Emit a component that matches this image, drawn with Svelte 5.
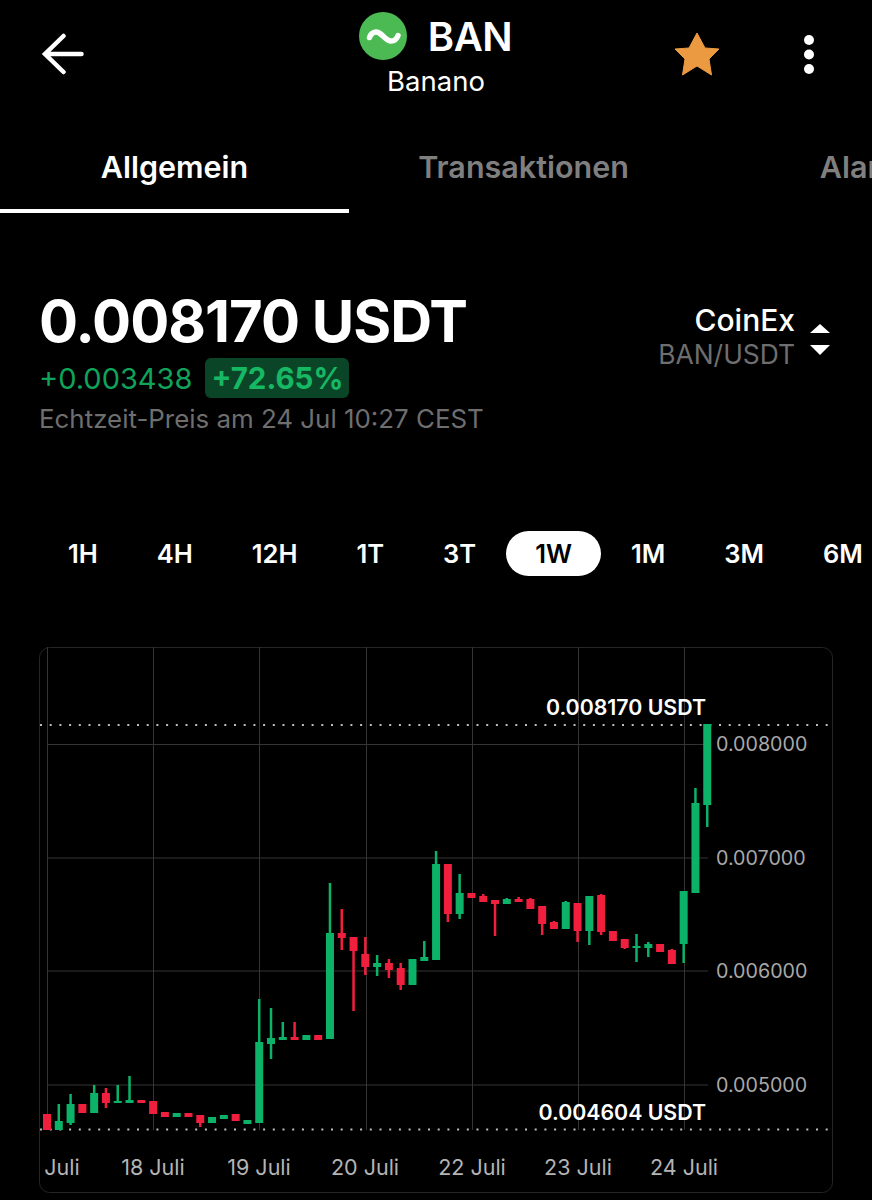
<script>
  const ranges = ['1H', '4H', '12H', '1T', '3T', '1W', '1M', '3M', '6M'];
  const activeRange = '1W';

  // top, bottom, wick top, wick bottom, up?  (pixel rows of the chart)
  const candles = [
    [1114, 1130, 1114, 1130, 0], [1121, 1130, 1104, 1130, 1], [1104, 1123, 1094, 1125, 1],
    [1104, 1113, 1104, 1113, 0], [1093, 1113, 1085, 1113, 1], [1093, 1103, 1088, 1108, 0],
    [1101, 1103, 1085, 1103, 1], [1100, 1103, 1076, 1103, 1], [1100, 1103, 1100, 1103, 0],
    [1101, 1114, 1101, 1114, 0], [1112, 1117, 1112, 1117, 0], [1113, 1117, 1113, 1117, 1],
    [1113, 1117, 1113, 1117, 0], [1115, 1123, 1115, 1127, 0], [1117, 1123, 1117, 1123, 1],
    [1115, 1119, 1115, 1119, 1], [1114, 1121, 1114, 1121, 0], [1120, 1124, 1120, 1124, 1],
    [1042, 1123, 999, 1123, 1], [1038, 1044, 1008, 1059, 1], [1037, 1040, 1022, 1040, 1],
    [1037, 1040, 1022, 1040, 0], [1035, 1040, 1035, 1040, 1], [1035, 1040, 1035, 1040, 0],
    [933, 1039, 883, 1039, 1], [933, 938, 909, 950, 0], [937, 951, 937, 1011, 0],
    [954, 967, 937, 975, 0], [963, 967, 955, 976, 1], [963, 970, 959, 978, 0],
    [968, 985, 963, 990, 0], [959, 985, 959, 985, 1], [957, 961, 941, 961, 1],
    [864, 960, 851, 960, 1], [864, 914, 864, 922, 0], [893, 914, 874, 919, 1],
    [893, 898, 893, 898, 0], [896, 902, 894, 902, 0], [900, 904, 900, 936, 0],
    [899, 904, 898, 904, 1], [899, 902, 897, 902, 0], [899, 909, 898, 909, 0],
    [906, 924, 906, 935, 0], [922, 929, 921, 929, 0], [902, 929, 901, 929, 1],
    [903, 931, 903, 942, 0], [896, 931, 896, 945, 1], [895, 932, 894, 935, 0],
    [931, 941, 931, 941, 0], [939, 948, 939, 949, 0], [946, 948, 934, 962, 1],
    [944, 948, 942, 957, 1], [944, 952, 944, 952, 0], [950, 964, 949, 964, 0],
    [891, 944, 891, 963, 1], [803, 893, 788, 893, 1], [724, 805, 724, 827, 1]
  ];

  const gridX = [47, 153, 259, 366, 472, 578, 684];
  const gridY = [744.5, 858, 971, 1085];
  const priceLabels = [['0.008000', 744], ['0.007000', 858], ['0.006000', 971], ['0.005000', 1085]];
  const dayLabels = [['Juli', 62], ['18 Juli', 153], ['19 Juli', 259], ['20 Juli', 365], ['22 Juli', 472], ['23 Juli', 578], ['24 Juli', 684]];
</script>

<div class="page">
  <header class="topbar">
    <svg class="back" viewBox="0 0 44 42" width="44" height="42" aria-label="Zurück">
      <path d="M40.500 21H4M22.500 3 4 21l18.500 18" fill="none" stroke="#fff" stroke-width="4.500" stroke-linecap="round" />
    </svg>
    <div class="coin">
      <div class="coin-row">
        <svg viewBox="0 0 48 48" width="48" height="48">
          <circle cx="24" cy="24" r="24" fill="#4cba52" />
          <path d="M10.500 25.500C12 20.500 17 18.500 21 21.500S28 29 32 29C36 29 38 26.500 39 23.500" fill="none" stroke="#fff" stroke-width="5.500" stroke-linecap="round" />
        </svg>
        <span class="symbol">BAN</span>
      </div>
      <div class="coin-name">Banano</div>
    </div>
    <div class="actions">
      <svg viewBox="0 0 46 44" width="46" height="44">
        <path d="M23 1 31 16 45 17 35 27 37.500 43 23 34 8.500 43 11 27 1 17 15 16Z" fill="#ec9a42" stroke="#ec9a42" stroke-linejoin="round" />
      </svg>
      <svg viewBox="0 0 12 41" width="12" height="41">
        <circle cx="6" cy="6" r="5" fill="#fff" />
        <circle cx="6" cy="20.500" r="5" fill="#fff" />
        <circle cx="6" cy="35" r="5" fill="#fff" />
      </svg>
    </div>
  </header>

  <nav class="tabs">
    <div class="tab active">Allgemein</div>
    <div class="tab">Transaktionen</div>
    <div class="tab">Alarme</div>
  </nav>

  <section class="quote">
    <div>
      <div class="price">0.008170 USDT</div>
      <div class="change">
        <span>+0.003438</span>
        <span class="percent">+72.65%</span>
      </div>
      <div class="time">Echtzeit-Preis am 24 Jul 10:27 CEST</div>
    </div>
    <div class="market">
      <div class="market-text">
        <div class="exchange">CoinEx</div>
        <div class="pair">BAN/USDT</div>
      </div>
      <div class="carets">
        <span class="up"></span>
        <span class="down"></span>
      </div>
    </div>
  </section>

  <div class="ranges">
    {#each ranges as r}
      <div class="range" class:active={r === activeRange}>{r}</div>
    {/each}
  </div>

  <svg class="chart" viewBox="0 640 872 560" width="872" height="560">
    <rect x="39.500" y="647.500" width="793" height="545" rx="10" fill="none" stroke="#262626" />
    {#each gridX as x}
      <line x1={x + 0.5} x2={x + 0.5} y1="647" y2="1130" stroke="#343434" />
    {/each}
    {#each gridY as y}
      <line x1="47" x2="708" y1={y} y2={y} stroke="#343434" />
    {/each}
    <line x1="40" x2="830" y1="725" y2="725" class="dots" />
    <line x1="40" x2="830" y1="1129.500" y2="1129.500" class="dots" />

    {#each candles as [top, bottom, wickTop, wickBottom, up], i}
      {@const x = 47 + i * 11.79}
      <rect x={x - 1.25} y={wickTop} width="2.5" height={wickBottom - wickTop} fill={up ? '#0bb268' : '#f01f3e'} />
      <rect x={x - 4} y={top} width="8" height={bottom - top} fill={up ? '#0bb268' : '#f01f3e'} />
    {/each}

    <text x="706" y="715" text-anchor="end" class="mark">0.008170 USDT</text>
    <text x="706" y="1120" text-anchor="end" class="mark">0.004604 USDT</text>
    {#each priceLabels as [label, y]}
      <text x="716" y={y + 7} class="axis">{label}</text>
    {/each}
    {#each dayLabels as [label, x]}
      <text x={x} y="1174.500" text-anchor="middle" class="axis day">{label}</text>
    {/each}
  </svg>
</div>

<style>
  :global(body) {
    background: #000;
  }

  .page {
    width: 872px;
    height: 1200px;
    overflow: hidden;
    background: #000;
    color: #fff;
    font-family: Inter, "Liberation Sans", sans-serif;
  }

  .topbar {
    display: grid;
    grid-template-columns: 1fr auto 1fr;
    align-items: start;
    padding: 12px 41px 0;
    height: 122px;
    box-sizing: border-box;
  }

  .back {
    margin-top: 21px;
  }

  .coin {
    display: flex;
    flex-direction: column;
    align-items: center;
  }

  .coin-row {
    display: flex;
    align-items: center;
    gap: 21px;
    height: 48px;
    margin-left: -1px;
  }

  .symbol {
    font-size: 40px;
    font-weight: 600;
    letter-spacing: -0.5px;
  }

  .coin-name {
    font-size: 27.500px;
    line-height: 42px;
  }

  .actions {
    display: flex;
    justify-content: flex-end;
    align-items: center;
    gap: 83px;
    margin-top: 20px;
    padding-right: 16px;
  }

  .tabs {
    display: flex;
    overflow: hidden;
  }

  .tab {
    flex: 0 0 349px;
    height: 91px;
    box-sizing: border-box;
    padding-top: 24px;
    text-align: center;
    font-size: 30.500px;
    line-height: 42px;
    font-weight: 600;
    color: #7f7f7f;
  }

  .tab.active {
    color: #fff;
    border-bottom: 4px solid #fff;
  }

  .quote {
    display: flex;
    justify-content: space-between;
    padding: 78px 42px 0 39px;
    height: 318px;
    box-sizing: border-box;
  }

  .price {
    font-size: 58px;
    line-height: 60px;
    font-weight: 700;
    letter-spacing: -1px;
  }

  .change {
    display: flex;
    align-items: center;
    gap: 13px;
    margin-top: 7px;
    font-size: 29px;
    color: #10a35a;
  }

  .percent {
    display: block;
    padding: 0 6px;
    line-height: 40px;
    border-radius: 6px;
    background: #0b4527;
    color: #17b864;
    font-size: 29.500px;
    font-weight: 700;
  }

  .time {
    margin-top: 1px;
    font-size: 25.900px;
    line-height: 40px;
    color: #6e6e6e;
  }

  .market {
    display: flex;
    align-items: flex-start;
    gap: 15px;
    padding-top: 12px;
  }

  .market-text {
    text-align: right;
  }

  .exchange {
    font-size: 30px;
    line-height: 34px;
    font-weight: 500;
  }

  .pair {
    font-size: 26.400px;
    line-height: 34px;
    color: #6e6e6e;
  }

  .carets {
    display: flex;
    flex-direction: column;
    gap: 12px;
    padding-top: 21px;
  }

  .up,
  .down {
    width: 0;
    height: 0;
    border-left: 10px solid transparent;
    border-right: 10px solid transparent;
  }

  .up {
    border-bottom: 9px solid #fff;
  }

  .down {
    border-top: 10px solid #fff;
  }

  .ranges {
    display: flex;
    align-items: center;
    padding-left: 38.500px;
    height: 45px;
    margin-bottom: 65px;
    white-space: nowrap;
  }

  .range {
    padding: 0 29.500px;
    line-height: 45px;
    border-radius: 23px;
    font-size: 25.500px;
    font-weight: 600;
  }

  .range.active {
    padding: 0 29px;
    margin: 0 0.500px;
    background: #fff;
    color: #000;
  }

  .chart {
    display: block;
    margin-top: -1px;
  }

  .dots {
    stroke: #bdbdbd;
    stroke-width: 2;
    stroke-dasharray: 2 7.700;
  }

  .mark {
    font-size: 21.300px;
    font-weight: 600;
    fill: #fff;
  }

  .axis {
    font-size: 19.700px;
    fill: #a8a8a8;
  }

  .axis.day {
    font-size: 21.500px;
    fill: #b4b4b4;
  }
</style>
